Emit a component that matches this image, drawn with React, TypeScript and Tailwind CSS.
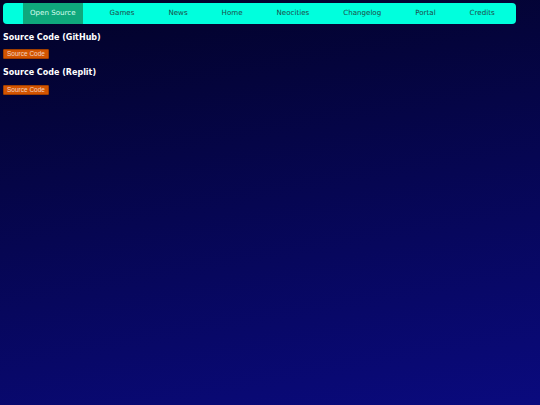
import React from 'react';

const links = ['Open Source', 'Games', 'News', 'Home', 'Neocities', 'Changelog', 'Portal', 'Credits'];

function App() {
  return (
    <div className="min-h-screen bg-linear-[170deg] from-[#020226] to-[#0a0a7e] px-[3px] pt-[3px] font-['DejaVu_Sans',sans-serif]">
      <nav className="flex w-[513px] h-[21px] items-stretch gap-[20px] rounded-[4px] bg-[#00ffdd] pl-[20px]">
        {links.map((name, i) => (
          <a
            key={name}
            className={
              'flex items-center whitespace-nowrap px-[7px] text-[7.1px] ' +
              (i === 0 ? 'bg-[#0fa87c] text-[#d8fff0]' : 'text-[#1f4a48]')
            }
          >
            {name}
          </a>
        ))}
      </nav>

      <h2 className="mt-[8px] text-[8px] font-bold text-white leading-[11px]">Source Code (GitHub)</h2>
      <button className="block mt-[6px] h-[10px] px-[3px] rounded-[1px] border border-[#a03e00] bg-[#d35400] text-[6.5px] leading-none text-[#f3d6c4] font-['Liberation_Sans',sans-serif]">
        Source Code
      </button>

      <h2 className="mt-[8px] text-[8px] font-bold text-white leading-[11px]">Source Code (Replit)</h2>
      <button className="block mt-[7px] h-[10px] px-[3px] rounded-[1px] border border-[#a03e00] bg-[#d35400] text-[6.5px] leading-none text-[#f3d6c4] font-['Liberation_Sans',sans-serif]">
        Source Code
      </button>
    </div>
  );
}

export default App;
